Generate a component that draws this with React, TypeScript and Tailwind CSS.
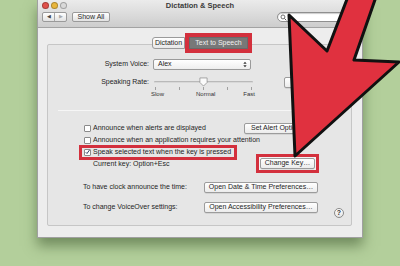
const font = "font-['Liberation_Sans',Arial,sans-serif]";

const MacButton = ({ label, className = "" }: { label: string; className?: string }) => (
  <div
    className={`h-[11px] flex items-center justify-center rounded-[2px] border border-[#9c9c9c] bg-gradient-to-b from-[#ffffff] to-[#ececec] text-[7px] text-[#1f1f1f] whitespace-nowrap overflow-hidden shadow-[0_0.5px_0_rgba(0,0,0,0.15)] ${className}`}
  >
    {label}
  </div>
);

const Check = ({ checked = false }: { checked?: boolean }) => (
  <div className="w-[7px] h-[7px] shrink-0 border border-[#8a8a8a] bg-white rounded-[1px] flex items-center justify-center">
    {checked && (
      <svg viewBox="0 0 10 10" className="w-[8px] h-[8px] -mt-[1px]">
        <path d="M1.5 5.5 L4 8 L9 1" fill="none" stroke="#1b2a55" strokeWidth="1.8" />
      </svg>
    )}
  </div>
);

const Light = ({ color }: { color: string }) => (
  <div className={`w-[7px] h-[7px] rounded-full border border-black/25 ${color}`} />
);

export default function App() {
  return (
    <div className={`relative w-[400px] h-[266px] overflow-hidden bg-[#b3cf9b] ${font} text-[7px] text-[#1e1e1e]`}>
      {/* window */}
      <div className="ml-[37px] w-[326px] h-[238px] flex flex-col bg-[#ededed] border-x border-b border-[#a0a0a0] shadow-[0_8px_12px_rgba(60,85,45,0.55)]">
        {/* toolbar */}
        <div className="h-[28px] shrink-0 flex flex-col bg-gradient-to-b from-[#ebebeb] to-[#cdcdcd] border-b border-[#a3a3a3]">
          <div className="h-[11px] grid grid-cols-[1fr_auto_1fr] items-center px-[4px]">
            <div className="flex gap-[2px]">
              <Light color="bg-[#e0504a]" />
              <Light color="bg-[#e9b63c]" />
              <Light color="bg-[#d9d9d9]" />
            </div>
            <div className="text-[7.5px] font-bold text-[#3a3a3a]">Dictation &amp; Speech</div>
            <div />
          </div>
          <div className="flex items-center pl-[4px] pr-[17px] mt-[1px]">
            <div className="flex h-[10px] w-[25px] border border-[#9a9a9a] rounded-[2px] bg-gradient-to-b from-white to-[#e2e2e2]">
              <div className="flex-1 flex items-center justify-center border-r border-[#a8a8a8] text-[5px] text-[#444]">◀</div>
              <div className="flex-1 flex items-center justify-center text-[5px] text-[#aaa]">▶</div>
            </div>
            <div className="ml-[5px] h-[10px] w-[38px] flex items-center justify-center border border-[#9a9a9a] rounded-[2px] bg-gradient-to-b from-white to-[#e2e2e2] text-[7px] text-[#2a2a2a]">
              Show All
            </div>
            <div className="ml-auto h-[10px] w-[68px] rounded-full border border-[#8f8f8f] bg-white flex items-center pl-[2px] shadow-[inset_0_1px_1px_rgba(0,0,0,0.2)]">
              <svg viewBox="0 0 10 10" className="w-[7px] h-[7px]">
                <circle cx="4.2" cy="4.2" r="2.8" fill="none" stroke="#555" strokeWidth="1.2" />
                <path d="M6.3 6.3 L9 9" stroke="#555" strokeWidth="1.4" />
              </svg>
            </div>
          </div>
        </div>

        {/* content */}
        <div className="flex-1 flex flex-col px-[9px] pb-[11px] pr-[10px]">
          {/* tabs */}
          <div className="relative z-10 flex items-center pl-[105px] mt-[5px] h-[20px]">
            <div className="h-[12px] w-[33px] flex items-center justify-center rounded-l-[3px] border border-[#9a9a9a] bg-gradient-to-b from-white to-[#e8e8e8] text-[7px]">
              Dictation
            </div>
            <div className="border-[3px] border-[#d3303d] p-[1px] bg-[#d3303d]">
              <div className="h-[12px] w-[59px] flex items-center justify-center bg-[#787878] text-[7px] text-[#f0f0f0] border border-[#6a6a6a]">
                Text to Speech
              </div>
            </div>
          </div>

          {/* group box */}
          <div className="-mt-[9px] flex-1 flex flex-col border border-[#c6c6c6] bg-[#e6e6e6] rounded-[2px]">
            {/* system voice */}
            <div className="flex items-center mt-[13px] h-[12px]">
              <div className="w-[101px] text-right">System Voice:</div>
              <div className="ml-[4px] w-[98px] h-[11px] flex items-center justify-between pl-[4px] pr-[3px] border border-[#9a9a9a] rounded-[2px] bg-gradient-to-b from-white to-[#eeeeee]">
                <span>Alex</span>
                <svg viewBox="0 0 6 10" className="w-[4px] h-[7px]">
                  <path d="M0.5 4 L3 1 L5.5 4 Z M0.5 6 L3 9 L5.5 6 Z" fill="#333" />
                </svg>
              </div>
            </div>

            {/* speaking rate */}
            <div className="flex items-center mt-[6px] h-[12px]">
              <div className="w-[101px] text-right">Speaking Rate:</div>
              <div className="relative ml-[5px] w-[99px] h-[12px] flex items-center">
                <div className="w-full h-[2px] rounded-full bg-[#b9b9b9] border-b border-[#d8d8d8]" />
                <svg viewBox="0 0 10 11" className="absolute left-[45px] top-[1px] w-[9px] h-[10px]">
                  <path d="M1 1 H9 V6 L5 10 L1 6 Z" fill="#fafafa" stroke="#8a8a8a" strokeWidth="0.8" />
                </svg>
              </div>
              <MacButton label="Play" className="ml-[31px] w-[30px]" />
            </div>
            <div className="flex ml-[106px] w-[99px] justify-between px-[1px] h-[3px] -mt-[1px]">
              {[0, 1, 2, 3, 4].map((i) => (
                <div key={i} className="w-px h-[3px] bg-[#a0a0a0]" />
              ))}
            </div>
            <div className="flex ml-[103px] w-[104px] justify-between text-[6px] leading-[8px] text-[#333]">
              <span>Slow</span>
              <span className="ml-[4px]">Normal</span>
              <span>Fast</span>
            </div>

            <div className="mt-[12px] mx-[10px] mr-[7px] h-px bg-[#bdbdbd] border-b border-[#f6f6f6]" />

            {/* announcements */}
            <div className="flex items-center mt-[11px] h-[12px] pl-[36px]">
              <div className="w-[160px] flex items-center gap-[2px]">
                <Check />
                <span className="whitespace-nowrap">Announce when alerts are displayed</span>
              </div>
              <MacButton label="Set Alert Options…" className="w-[66px] justify-start pl-[6px]" />
            </div>
            <div className="flex items-center h-[12px] pl-[36px] gap-[2px]">
              <Check />
              <span className="whitespace-nowrap">Announce when an application requires your attention</span>
            </div>
            <div className="flex -mt-[1px] ml-[31px]">
              <div className="flex items-center gap-[2px] border-[3px] border-[#d3303d] pl-[2px] pr-[3px] h-[15px]">
                <Check checked />
                <span className="whitespace-nowrap">Speak selected text when the key is pressed</span>
              </div>
            </div>
            <div className="flex items-center -mt-[6px] h-[19px] pl-[45px]">
              <div className="w-[163px] pt-[1px]">Current key: Option+Esc</div>
              <div className="border-[3px] border-[#d3303d] px-[1px] py-[1px] bg-[#f2f2f2]">
                <MacButton label="Change Key…" className="w-[55px]" />
              </div>
            </div>

            {/* preferences */}
            <div className="flex items-center mt-[8px] h-[12px] pl-[35px]">
              <div className="w-[121px]">To have clock announce the time:</div>
              <MacButton label="Open Date & Time Preferences…" className="w-[114px]" />
            </div>
            <div className="flex items-center mt-[8px] h-[12px] pl-[35px]">
              <div className="w-[121px]">To change VoiceOver settings:</div>
              <MacButton label="Open Accessibility Preferences…" className="w-[114px]" />
              <div className="ml-[16px] mt-[12px] w-[10px] h-[10px] rounded-full border border-[#8a8a8a] bg-gradient-to-b from-white to-[#e4e4e4] flex items-center justify-center text-[7px] font-bold text-[#333]">
                ?
              </div>
            </div>
          </div>
        </div>
      </div>

      {/* annotation arrow */}
      <svg className="absolute inset-0 w-[400px] h-[266px] pointer-events-none" viewBox="0 0 400 266">
        <polygon
          points="295,156 289,15 327,51 349,-6 377,-6 354,60 399,62"
          fill="#e0313f"
          stroke="#111"
          strokeWidth="3"
          strokeLinejoin="round"
        />
      </svg>
    </div>
  );
}
